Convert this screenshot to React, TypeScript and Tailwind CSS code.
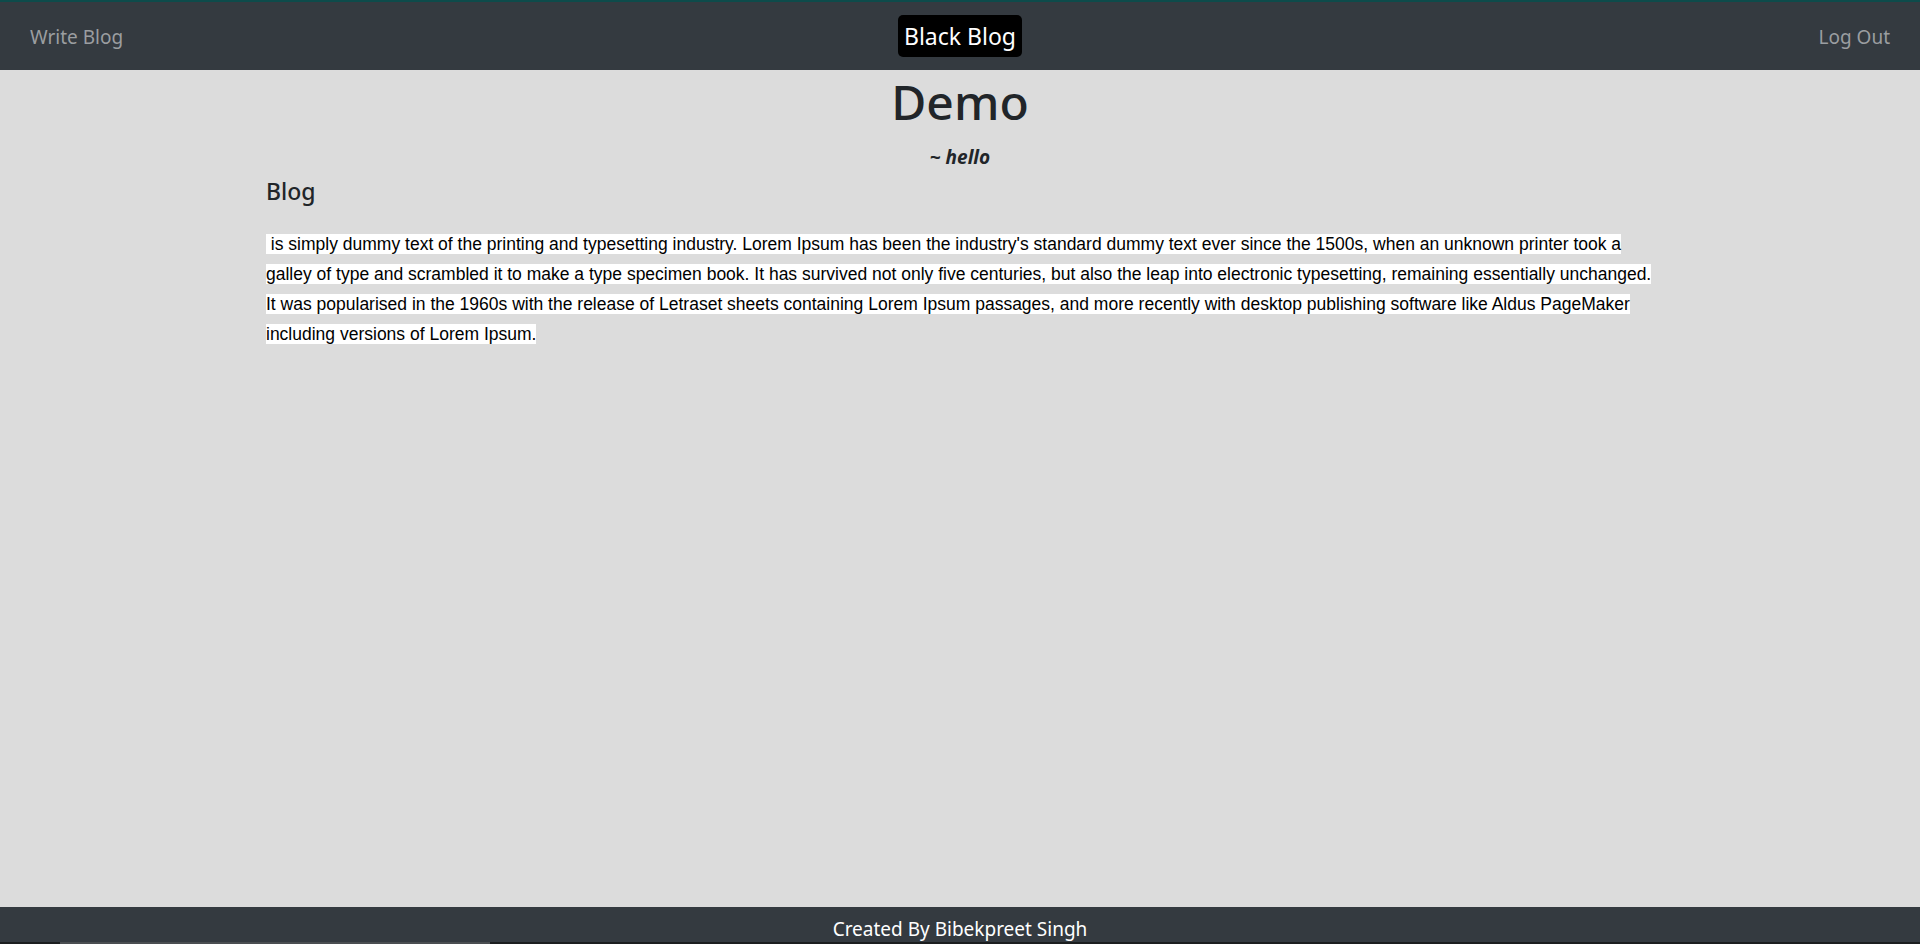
import React from "react";

const uiFont = "font-['Noto_Sans','Open_Sans',sans-serif]";

const blogText =
  "\u00a0is simply dummy text of the printing and typesetting industry. Lorem Ipsum has been the industry's standard dummy text ever since the 1500s, when an unknown printer took a galley of type and scrambled it to make a type specimen book. It has survived not only five centuries, but also the leap into electronic typesetting, remaining essentially unchanged. It was popularised in the 1960s with the release of Letraset sheets containing Lorem Ipsum passages, and more recently with desktop publishing software like Aldus PageMaker including versions of Lorem Ipsum.";

function Navbar() {
  return (
    <nav className="h-[70px] bg-[#343a40] border-t-2 border-[#0d4b4b] grid grid-cols-[1fr_auto_1fr] items-center px-[30px]">
      <a className="justify-self-start text-[19px] text-[#9b9ea1] cursor-pointer pt-[2px]">Write Blog</a>
      <div className="bg-black text-white text-[23px] rounded-[5px] h-[42px] px-[6px] flex items-center">
        Black Blog
      </div>
      <a className="justify-self-end text-[19px] text-[#9b9ea1] cursor-pointer pt-[2px]">Log Out</a>
    </nav>
  );
}

export default function App() {
  return (
    <div className={`${uiFont} bg-[#dcdcdc] text-[#212529]`}>
      <Navbar />

      <main className="h-[837px]">
        {/* Post header */}
        <div className="text-center">
          <h1 className="text-[48px] font-medium leading-[56px] pt-[4px]">Demo</h1>
          <p className="text-[19px] font-bold italic leading-[28px] mt-[13px]">~ hello</p>
        </div>

        <div className="w-[1388px] mx-auto">
          <h2 className="text-[23px] font-medium leading-[32px] mt-[4px]">Blog</h2>
          <p className="mt-[22px] font-['Liberation_Sans',Arial,sans-serif] text-[17.5px] leading-[30px] text-black">
            <span className="bg-white">{blogText}</span>
          </p>
        </div>
      </main>

      <footer className="h-[35px] bg-[#343a40] text-white text-[19px] flex items-start justify-center pt-[8px] leading-[28px]">
        Created By Bibekpreet Singh
      </footer>
      {/* scrollbar sliver at the very bottom */}
      <div className="h-[2px] bg-[#1b1e1f] flex">
        <div className="ml-[60px] w-[430px] bg-[#4a4e51]" />
      </div>
    </div>
  );
}
